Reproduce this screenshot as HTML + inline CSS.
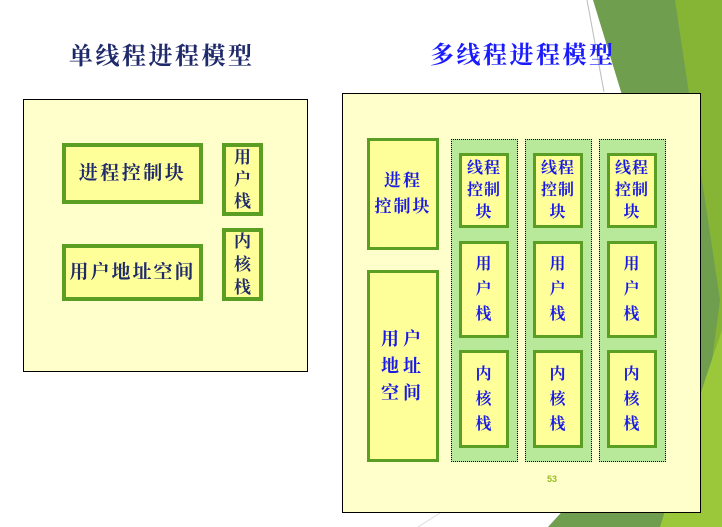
<!DOCTYPE html>
<html><head><meta charset="utf-8"><style>
*{margin:0;padding:0;box-sizing:border-box}
body{width:722px;height:527px;position:relative;background:#fff;overflow:hidden;font-family:"Liberation Serif","Noto Serif CJK SC","Noto Sans CJK SC",serif;font-weight:bold}
.a{position:absolute}
.t{position:absolute;font-size:24px;white-space:nowrap;letter-spacing:2.5px}
.b{position:absolute;background:#ffff99;border:4px solid #5a9e23;display:flex;align-items:center;justify-content:center;text-align:center;color:#1f2a6b;font-size:19px;line-height:25px;letter-spacing:2.5px}
.c{position:absolute;background:#ffff99;border:3px solid #5a9e23;display:flex;align-items:center;justify-content:center;text-align:center;color:#1a1ae8;font-size:16px;line-height:25px;letter-spacing:1px}
.col{position:absolute;top:139px;width:67px;height:323px;background:#b8e89a;border:1px dotted #000}
</style></head><body>
<svg class="a" style="left:0;top:0" width="722" height="527">
<polygon points="593,0 722,0 722,527 548,527 600,470 640,200 622,95" fill="#6f9e4f"/>
<polygon points="675,0 722,0 722,527 690,527 720,300" fill="#86b535"/>
<polygon points="705,380 722,330 722,527 660,527" fill="#9ac83a"/>
<line x1="587" y1="0" x2="604" y2="92" stroke="#bbb" stroke-width="1"/>
<line x1="418" y1="527" x2="440" y2="513" stroke="#ddd" stroke-width="1"/>
</svg>
<div class="t" style="left:69px;top:36px;color:#1f2a6b">单线程进程模型</div>
<div class="a" style="left:23px;top:99px;width:285px;height:273px;background:#ffffcc;border:1px solid #000"></div>
<div class="b" style="left:62px;top:143px;width:141px;height:61px">进程控制块</div>
<div class="b" style="left:62px;top:244px;width:141px;height:57px;letter-spacing:2px">用户地址空间</div>
<div class="b" style="left:222px;top:143px;width:41px;height:73px;font-size:17px;line-height:22px;letter-spacing:0">用<br>户<br>栈</div>
<div class="b" style="left:222px;top:228px;width:41px;height:73px;font-size:17px;line-height:23px;letter-spacing:0">内<br>核<br>栈</div>

<div class="t" style="left:430px;top:35px;color:#1a1aff">多线程进程模型</div>
<div class="a" style="left:342px;top:93px;width:359px;height:420px;background:#ffffcc;border:1px solid #000"></div>
<div class="c" style="left:367px;top:138px;width:72px;height:112px;font-size:17px;line-height:26px;letter-spacing:2px">进程<br>控制块</div>
<div class="c" style="left:367px;top:270px;width:72px;height:192px;font-size:18px;line-height:27px;letter-spacing:4px">用户<br>地址<br>空间</div>

<div class="col" style="left:451px"></div>
<div class="col" style="left:525px"></div>
<div class="col" style="left:599px"></div>

<div class="c" style="left:459px;top:153px;width:50px;height:75px;line-height:22px">线程<br>控制<br>块</div>
<div class="c" style="left:459px;top:241px;width:50px;height:97px">用<br>户<br>栈</div>
<div class="c" style="left:459px;top:350px;width:50px;height:98px">内<br>核<br>栈</div>
<div class="c" style="left:533px;top:153px;width:50px;height:75px;line-height:22px">线程<br>控制<br>块</div>
<div class="c" style="left:533px;top:241px;width:50px;height:97px">用<br>户<br>栈</div>
<div class="c" style="left:533px;top:350px;width:50px;height:98px">内<br>核<br>栈</div>
<div class="c" style="left:607px;top:153px;width:50px;height:75px;line-height:22px">线程<br>控制<br>块</div>
<div class="c" style="left:607px;top:241px;width:50px;height:97px">用<br>户<br>栈</div>
<div class="c" style="left:607px;top:350px;width:50px;height:98px">内<br>核<br>栈</div>

<div class="a" style="left:547px;top:474px;font-size:9px;color:#99bb22;font-family:'Liberation Sans',sans-serif">53</div>
</body></html>
